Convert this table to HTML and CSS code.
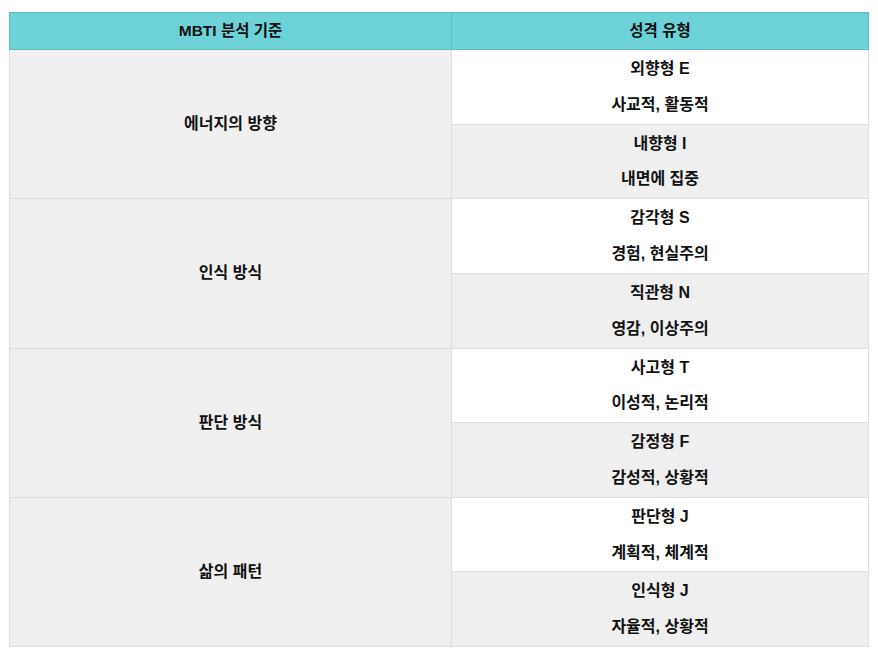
FILE: index.html
```html
<!DOCTYPE html>
<html lang="ko">
<head>
<meta charset="utf-8">
<title>MBTI</title>
<link rel="stylesheet" href="styles.css">
</head>
<body>
<table class="mbti">
  <thead>
    <tr><th class="col-a">MBTI 분석 기준</th><th class="col-b">성격 유형</th></tr>
  </thead>
  <tbody>
    <tr><td class="crit" rowspan="2">에너지의 방향</td><td class="type odd"><b>외향형 E</b><br><br>사교적, 활동적</td></tr>
    <tr><td class="type even"><b>내향형 I</b><br><br>내면에 집중</td></tr>
    <tr><td class="crit" rowspan="2">인식 방식</td><td class="type odd"><b>감각형 S</b><br><br>경험, 현실주의</td></tr>
    <tr><td class="type even"><b>직관형 N</b><br><br>영감, 이상주의</td></tr>
    <tr><td class="crit" rowspan="2">판단 방식</td><td class="type odd"><b>사고형 T</b><br><br>이성적, 논리적</td></tr>
    <tr><td class="type even"><b>감정형 F</b><br><br>감성적, 상황적</td></tr>
    <tr><td class="crit" rowspan="2">삶의 패턴</td><td class="type odd"><b>판단형 J</b><br><br>계획적, 체계적</td></tr>
    <tr><td class="type even"><b>인식형 J</b><br><br>자율적, 상황적</td></tr>
  </tbody>
</table>
</body>
</html>
```
FILE: styles.css
```css
body {
  margin: 8px;
  background: #fff;
  font-family: "Liberation Sans", "Noto Sans CJK KR", sans-serif;
  font-size: 16px;
  color: #111;
}
.mbti {
  width: 860px;
  margin: 4px auto 0;
  border-collapse: collapse;
  line-height: 17.875px;
  text-align: center;
}
.mbti th {
  background: #6dd3d8;
  border: 1px solid #5cbfc5;
  padding: 9px 8px;
  height: 18px;
  font-weight: bold;
  font-size: 15.5px;
}
.col-a { width: 425px; }
.mbti td {
  border: 1px solid #dddddd;
  padding: 10px 8px;
  font-weight: bold;
}
.crit { background: #efefef; }
.type.odd { background: #ffffff; }
.type.even { background: #efefef; }
.type b { font-weight: bold; }
```
